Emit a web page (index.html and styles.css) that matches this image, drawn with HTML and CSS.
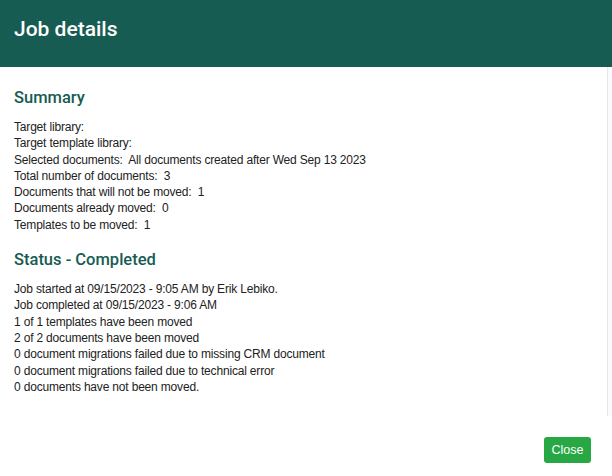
FILE: index.html
```html
<!DOCTYPE html>
<html lang="en">
<head>
<meta charset="utf-8">
<title>Job details</title>
<link rel="stylesheet" href="styles.css">
</head>
<body>
<div class="dialog">
  <header class="dlg-header">
    <h1 class="dlg-title">Job details</h1>
  </header>
  <div class="dlg-body-row">
    <main class="dlg-body">
      <section class="section">
        <h2 class="section-title">Summary</h2>
        <div class="lines">
          <p>Target library:</p>
          <p>Target template library:</p>
          <p>Selected documents:&nbsp; All documents created after Wed Sep 13 2023</p>
          <p>Total number of documents:&nbsp; 3</p>
          <p>Documents that will not be moved:&nbsp; 1</p>
          <p>Documents already moved:&nbsp; 0</p>
          <p>Templates to be moved:&nbsp; 1</p>
        </div>
      </section>
      <section class="section">
        <h2 class="section-title">Status - Completed</h2>
        <div class="lines">
          <p>Job started at 09/15/2023 - 9:05 AM by Erik Lebiko.</p>
          <p>Job completed at 09/15/2023 - 9:06 AM</p>
          <p>1 of 1 templates have been moved</p>
          <p>2 of 2 documents have been moved</p>
          <p>0 document migrations failed due to missing CRM document</p>
          <p>0 document migrations failed due to technical error</p>
          <p>0 documents have not been moved.</p>
        </div>
      </section>
    </main>
    <div class="scroll-track"></div>
  </div>
  <footer class="dlg-footer">
    <button class="btn-close" type="button">Close</button>
  </footer>
</div>
</body>
</html>
```
FILE: styles.css
```css
html, body {
  margin: 0;
  padding: 0;
  background: #ffffff;
}
body {
  font-family: "Liberation Sans", Arial, sans-serif;
  color: #222222;
}
.dialog {
  width: 612px;
  height: 476px;
  display: flex;
  flex-direction: column;
}
.dlg-header {
  height: 67px;
  box-sizing: border-box;
  background: #175c52;
  padding: 16px 14px 0;
}
.dlg-title {
  margin: 0;
  font-family: Roboto, "Liberation Sans", Arial, sans-serif;
  font-size: 21px;
  line-height: 26px;
  font-weight: 500;
  color: #ffffff;
}
.dlg-body-row {
  height: 349px;
  display: flex;
}
.dlg-body {
  flex: 1;
  padding: 20px 14px 0;
}
.scroll-track {
  width: 4px;
  border-left: 1px solid #e6e6e6;
  background: #fafafa;
}
.section + .section {
  margin-top: 16px;
}
.section-title {
  margin: 0;
  font-family: Roboto, "Liberation Sans", Arial, sans-serif;
  font-size: 16.5px;
  line-height: 22px;
  font-weight: 500;
  color: #175c52;
}
.lines {
  margin-top: 10px;
  font-size: 12px;
  letter-spacing: -0.18px;
  line-height: 16.3px;
}
.lines p {
  margin: 0;
}
.dlg-footer {
  flex: 1;
  display: flex;
  justify-content: flex-end;
  align-items: flex-start;
  padding: 21px 21px 0 0;
}
.btn-close {
  width: 47px;
  height: 26px;
  padding: 0;
  border: none;
  border-radius: 3px;
  background: #28a745;
  color: #ffffff;
  font-family: "Liberation Sans", Arial, sans-serif;
  font-size: 12.5px;
}
```
